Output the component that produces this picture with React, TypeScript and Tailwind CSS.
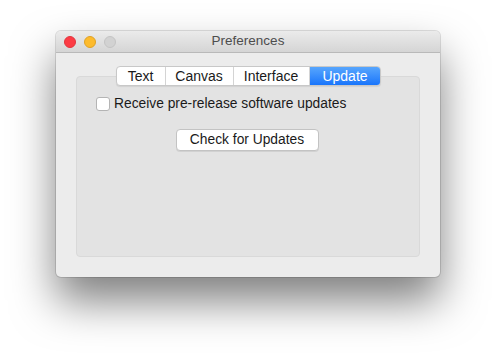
const tabs = ['Text', 'Canvas', 'Interface', 'Update'];
const tabWidths = ['w-[49px]', 'w-[68px]', 'w-[76px]', 'w-[71px]'];

function TrafficLights() {
  return (
    <div className="flex items-center gap-[8px]">
      <span className="w-[12px] h-[12px] rounded-full bg-[#fc3b44] border border-[#e2353d]" />
      <span className="w-[12px] h-[12px] rounded-full bg-[#fdbb2d] border border-[#e0a225]" />
      <span className="w-[12px] h-[12px] rounded-full bg-[#d2d2d2] border border-[#c4c4c4]" />
    </div>
  );
}

export default function App() {
  return (
    <div
      className="w-[495px] h-[358px] bg-white pt-[31px] pl-[56px] overflow-hidden"
      style={{ fontFamily: '"Liberation Sans", Arial, sans-serif' }}
    >
      <div className="w-[384px] h-[246px] rounded-[5px] bg-[#ececec] flex flex-col shadow-[0_24px_44px_rgba(0,0,0,0.5),0_0_0_1px_rgba(0,0,0,0.12)]">
        {/* Title bar */}
        <div className="relative h-[22px] rounded-t-[5px] bg-gradient-to-b from-[#ebebeb] to-[#d5d5d5] border-b border-[#b9b9b9] flex items-center px-[8px]">
          <TrafficLights />
          <div className="absolute inset-0 flex items-center justify-center text-[13.5px] text-[#4d4d4d]">
            Preferences
          </div>
        </div>

        {/* Content */}
        <div className="flex-1 flex flex-col px-[20px] pt-[13px] pb-[20px]">
          <div className="relative z-10 flex justify-center -mb-[10px]">
            <div className="flex h-[20px] rounded-[4px] bg-white border border-[#c8c8c8] shadow-[0_1px_1px_rgba(0,0,0,0.08)] overflow-hidden text-[14px] text-[#1a1a1a]">
              {tabs.map((t, i) =>
                t === 'Update' ? (
                  <div
                    key={t}
                    className={`${tabWidths[i]} flex items-center justify-center bg-gradient-to-b from-[#5aa8fd] to-[#1372fb] text-white -my-px -mr-px`}
                  >
                    {t}
                  </div>
                ) : (
                  <div
                    key={t}
                    className={`${tabWidths[i]} flex items-center justify-center border-r border-[#d4d4d4]`}
                  >
                    {t}
                  </div>
                )
              )}
            </div>
          </div>
          <div className="flex-1 rounded-[4px] bg-[#e3e3e3] border border-[#d9d9d9] flex flex-col pt-[20px] px-[19px]">
            <label className="flex items-center gap-[4px] text-[13.8px] text-[#1a1a1a] h-[14px]">
              <span className="w-[14px] h-[14px] rounded-[3px] bg-white border border-[#b4b4b4]" />
              Receive pre-release software updates
            </label>
            <div className="flex justify-center mt-[18px] pr-[2px]">
              <button className="w-[143px] h-[22px] rounded-[4px] bg-white border border-[#c3c3c3] shadow-[0_1px_0_rgba(0,0,0,0.08)] text-[13.8px] text-[#1a1a1a]">
                Check for Updates
              </button>
            </div>
          </div>
        </div>
      </div>
    </div>
  );
}
